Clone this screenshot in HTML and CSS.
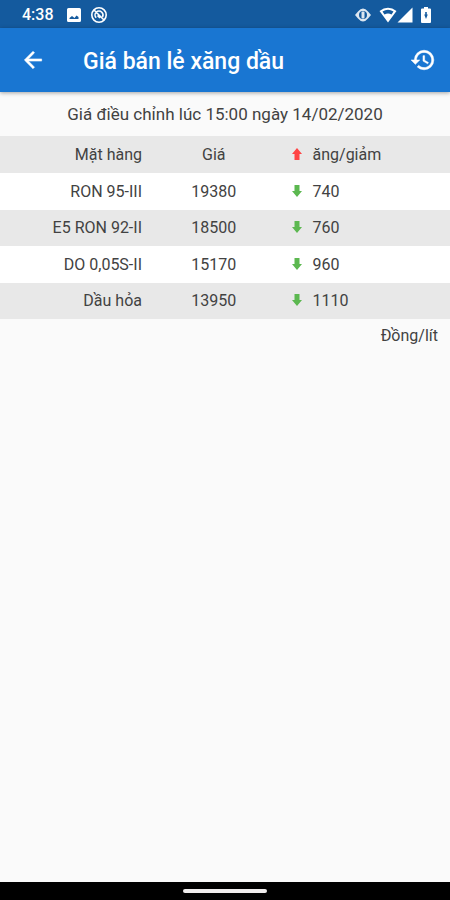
FILE: index.html
```html
<!DOCTYPE html>
<html lang="vi">
<head>
    <meta charset="UTF-8">
    <meta name="viewport" content="width=device-width, initial-scale=1.0">
    <title>Giá bán lẻ xăng dầu</title>
    <link rel="stylesheet" href="styles.css">
</head>
<body>
    <!-- Status bar -->
    <div class="status-bar">
        <div class="status-left">
            <span class="clock">4:38</span>
            <svg class="status-icon" viewBox="0 0 16 16"><path fill-rule="evenodd" d="M2.5 1h11A1.5 1.5 0 0 1 15 2.5v11a1.5 1.5 0 0 1-1.5 1.5h-11A1.5 1.5 0 0 1 1 13.500v-11A1.5 1.5 0 0 1 2.500 1zM3.500 12h9V10L10.500 8.500 8.500 11 6 9 3.500 11z"/></svg>
            <svg class="status-icon" viewBox="0 0 16 16"><g fill="none" stroke="#fff" stroke-width="1.600"><circle cx="8" cy="8" r="7.200"/><path d="M5.200 10.800a4 4 0 0 1 0-5.600 4 4 0 0 1 5.600 0 4 4 0 0 1 .6 4.800M3 3l10 10M6.500 8.500l2.500 2.500"/></g></svg>
        </div>
        <div class="status-right">
            <svg class="status-icon eye" viewBox="0 0 16 16"><path fill-rule="evenodd" d="M0 8l3-3.500Q8-1.500 13 4.500L16 8l-3 3.500Q8 17.500 3 11.500zM8 4a4 4 0 1 0 0 8 4 4 0 0 0 0-8z"/><rect x="6.500" y="4.500" width="3" height="7" rx="1"/></svg>
            <svg class="status-icon wifi" viewBox="0 0 18 16"><path fill-rule="evenodd" d="M9 15.500L.5 4Q9-2.500 17.500 4zM3.500 4.500L5.500 7.500q3.500-2 7 0L14.500 4.500Q9 1 3.500 4.500z"/></svg>
            <svg class="status-icon" viewBox="0 0 16 16"><path d="M15.500.5v15H.5z"/></svg>
            <svg class="status-icon battery" viewBox="0 0 10 16"><path fill-rule="evenodd" d="M3 0h4v1.500h2q1 0 1 1V15q0 1-1 1H1q-1 0-1-1V2.500q0-1 1-1h2zM4.200 5v2.500H3.200L5 12l1.800-4.500h-1V5z"/></svg>
        </div>
    </div>

    <header class="app-bar">
        <button class="btn-icon" type="button" aria-label="Quay lại">
            <svg viewBox="0 0 24 24"><path d="M20 11H7.830l5.590-5.590L12 4l-8 8 8 8 1.410-1.410L7.830 13H20z"/></svg>
        </button>
        <h1>Giá bán lẻ xăng dầu</h1>
        <button class="btn-icon" type="button" aria-label="Lịch sử giá">
            <svg viewBox="0 0 24 24"><path d="M13 3a9 9 0 0 0-9 9H1l3.890 3.890.07.140L9 12H6c0-3.870 3.130-7 7-7s7 3.130 7 7-3.130 7-7 7c-1.930 0-3.680-.790-4.940-2.060l-1.420 1.420A8.954 8.954 0 0 0 13 21a9 9 0 0 0 0-18zm-1 5v5l4.280 2.540.720-1.210-3.500-2.080V8z"/></svg>
        </button>
    </header>

    <main class="content">
        <p class="updated">Giá điều chỉnh lúc 15:00 ngày 14/02/2020</p>
        <table class="price-table">
            <thead>
                <tr>
                    <th class="name">Mặt hàng</th>
                    <th class="price">Giá</th>
                    <th class="change"><svg class="arrow up" viewBox="0 0 10 12"><path d="M5 0l5 6H7.500v6h-5V6H0z"/></svg>ăng/giảm</th>
                </tr>
            </thead>
            <tbody>
                <tr>
                    <td class="name">RON 95-III</td>
                    <td class="price">19380</td>
                    <td class="change"><svg class="arrow down" viewBox="0 0 10 12"><path d="M5 12l5-6H7.500V0h-5v6H0z"/></svg>740</td>
                </tr>
                <tr>
                    <td class="name">E5 RON 92-II</td>
                    <td class="price">18500</td>
                    <td class="change"><svg class="arrow down" viewBox="0 0 10 12"><path d="M5 12l5-6H7.500V0h-5v6H0z"/></svg>760</td>
                </tr>
                <tr>
                    <td class="name">DO 0,05S-II</td>
                    <td class="price">15170</td>
                    <td class="change"><svg class="arrow down" viewBox="0 0 10 12"><path d="M5 12l5-6H7.500V0h-5v6H0z"/></svg>960</td>
                </tr>
                <tr>
                    <td class="name">Dầu hỏa</td>
                    <td class="price">13950</td>
                    <td class="change"><svg class="arrow down" viewBox="0 0 10 12"><path d="M5 12l5-6H7.500V0h-5v6H0z"/></svg>1110</td>
                </tr>
            </tbody>
        </table>
        <p class="unit">Đồng/lít</p>
    </main>

    <!-- Gesture bar -->
    <footer class="nav-bar"><span class="nav-handle"></span></footer>
</body>
</html>
```
FILE: styles.css
```css
* { box-sizing: border-box; }
body { display: flex; flex-direction: column; min-height: 100vh; margin: 0; background: #fafafa; color: #424242; font-family: Roboto, "Noto Sans", sans-serif; font-size: 16px; line-height: 20px; }
svg { display: block; fill: currentColor; flex: none; }

.status-bar { display: flex; justify-content: space-between; align-items: center; height: 28px; padding: 2px 19px 0 22px; background: #145a9e; color: #fff; }
.status-left, .status-right { display: flex; align-items: center; }
.status-left { gap: 9px; }
.clock { margin-right: 3px; font-weight: 500; }
.status-icon { width: 16px; height: 16px; }
.wifi { width: 18px; margin-left: 8px; }
.eye { opacity: 0.85; }
.battery { width: 10px; margin-left: 8px; }

.app-bar { display: flex; align-items: center; height: 64px; padding: 0 14px 0 20px; background: #1976d2; color: #fff; box-shadow: 0 1px 4px rgba(0,0,0,0.35); }
.app-bar h1 { flex: 1; margin: 0 0 0 37px; padding-top: 4px; font-size: 23px; font-weight: 500; line-height: 28px; }
.btn-icon { padding: 0; border: none; background: none; color: inherit; cursor: pointer; }
.btn-icon svg { width: 26px; height: 26px; stroke: currentColor; stroke-width: 0.5; }

.content { flex: 1; }
.updated { margin: 0; padding: 12px 0; text-align: center; font-size: 17px; }
.price-table { width: 100%; border-collapse: collapse; table-layout: fixed; background: #fff; }
.price-table tr { height: 37px; }
.price-table tr:nth-child(even) { height: 36px; }
.price-table thead tr, .price-table tbody tr:nth-child(even) { background: #e8e8e8; }
.price-table th, .price-table td { padding: 0; font-weight: 400; }
.price-table .name { width: 32%; padding-right: 2px; text-align: right; }
.price-table .price { width: 31%; text-align: center; }
.price-table .change { text-align: left; }
.arrow { display: inline-block; width: 10px; height: 12px; margin: 0 11px 0 8px; }
.up { color: #ff4444; }
.down { color: #5cb850; }
.unit { margin: 0; padding: 7px 12px; text-align: right; }

.nav-bar { display: flex; justify-content: center; align-items: center; height: 18px; background: #000; }
.nav-handle { width: 84px; height: 4px; border-radius: 2px; background: #f0eded; }
```
